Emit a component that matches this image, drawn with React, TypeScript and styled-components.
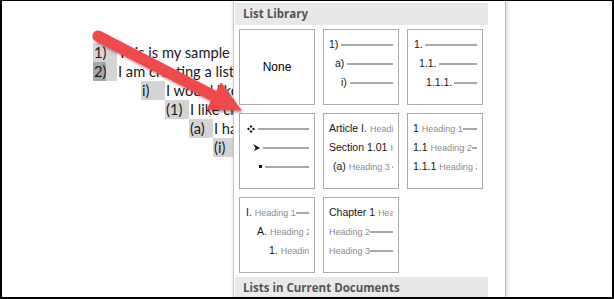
import styled, { createGlobalStyle } from "styled-components";

const GlobalStyle = createGlobalStyle`
    html, body {
        margin: 0;
        padding: 0;
        background: #ffffff;
    }
`;

const Frame = styled.div`
    position: relative;
    width: 614px;
    height: 299px;
    box-sizing: border-box;
    border: 2px solid #000;
    border-top-width: 1px;
    background: #fff;
    overflow: hidden;
`;

const Doc = styled.div`
    padding-top: 42px;
    font-family: Lato, "Liberation Sans", sans-serif;
    font-size: 14.67px;
    color: #1a1a1a;
`;

const DocLine = styled.div<{ $indent: number }>`
    display: flex;
    height: 19px;
    line-height: 19px;
    padding-left: ${(p) => p.$indent}px;
    white-space: nowrap;
`;

const NumBox = styled.span<{ $w: number }>`
    display: inline-flex;
    width: ${(p) => p.$w}px;
    flex-shrink: 0;
    background: #d4d4d4;
    margin-right: 1px;
`;

const NumText = styled.span<{ $selected?: boolean }>`
    display: inline-block;
    width: 12px;
    padding-left: 1px;
    background: ${(p) => (p.$selected ? "#a6a6a6" : "transparent")};
`;

const Panel = styled.div`
    position: absolute;
    left: 231px;
    top: 0;
    bottom: 0;
    width: 273px;
    box-sizing: border-box;
    padding: 2px 17px 0 1px;
    background: #fff;
    border-left: 1px solid #c9c9c9;
    border-right: 1px solid #bdbdbd;
    box-shadow: 2px 0 3px rgba(0, 0, 0, 0.12), -1px 0 2px rgba(0, 0, 0, 0.08);
`;

const SectionHeader = styled.div`
    height: 22px;
    line-height: 22px;
    background: #e9e9e9;
    padding-left: 8px;
    font-family: "Open Sans", "Noto Sans", sans-serif;
    font-weight: 700;
    font-size: 11.5px;
    color: #555;
    white-space: nowrap;
`;

const Grid = styled.div`
    display: grid;
    grid-template-columns: repeat(3, 76px);
    grid-auto-rows: 76px;
    gap: 8px;
    padding: 4px 0 4px 4px;
`;

const Tile = styled.div`
    box-sizing: border-box;
    border: 1px solid #ababab;
    padding: 5px 5px 0 0;
    overflow: hidden;
    font-family: "Liberation Sans", Arial, sans-serif;
    color: #151515;
`;

const NoneTile = styled(Tile)`
    display: flex;
    align-items: center;
    justify-content: center;
    padding: 0;
    font-size: 12px;
    color: #000;
`;

const Row = styled.div<{ $indent: number }>`
    display: flex;
    align-items: center;
    height: 19px;
    margin-left: ${(p) => p.$indent - 1}px;
    overflow: hidden;
    white-space: nowrap;
`;

const Label = styled.span`
    flex-shrink: 0;
    font-size: 10.5px;
    line-height: 19px;
`;

const Heading = styled.span`
    font-size: 9px;
    color: #8c8c8c;
    margin-left: 3px;
`;

const PlainHeading = styled(Heading)`
    margin-left: 0;
`;

const Rule = styled.span<{ $gap?: number }>`
    flex: 1 1 auto;
    min-width: 0;
    height: 2px;
    margin-left: ${(p) => p.$gap ?? 2}px;
    background: #a8a8a8;
`;

const Bullet = styled.svg`
    flex-shrink: 0;
    display: block;
`;

const Arrow = styled.svg`
    position: absolute;
    left: -2px;
    top: -1px;
    pointer-events: none;
`;

const docLines = [
    { indent: 91, num: "1)", text: "This is my sample text." },
    { indent: 91, num: "2)", text: "I am creating a list.", selected: true },
    { indent: 139, num: "i)", text: "I would like to see more." },
    { indent: 163, num: "(1)", text: "I like creating lists." },
    { indent: 187, num: "(a)", text: "I have many ideas." },
    { indent: 211, num: "(i)", text: "" },
];

const Diamond = () => (
    <Bullet width="8" height="8" viewBox="0 0 8 8">
        <path d="M4 0 L5.5 1.5 L4 3 L2.5 1.5Z M4 5 L5.5 6.5 L4 8 L2.5 6.5Z M0 4 L1.5 2.5 L3 4 L1.5 5.5Z M5 4 L6.5 2.5 L8 4 L6.5 5.5Z" fill="#111" />
    </Bullet>
);

const Arrowhead = () => (
    <Bullet width="7" height="7" viewBox="0 0 7 7">
        <path d="M0 0 L7 4 L1 7 L2.5 4Z" fill="#111" />
    </Bullet>
);

const Square = () => (
    <Bullet width="3" height="3" viewBox="0 0 3 3">
        <rect width="3" height="3" fill="#111" />
    </Bullet>
);

const App = () => {
    return (
        <>
            <GlobalStyle />
            <Frame>
                <Doc>
                    {docLines.map((l, i) => (
                        <DocLine key={i} $indent={l.indent}>
                            <NumBox $w={l.num.length > 2 ? 24 : 24}>
                                <NumText $selected={l.selected}>{l.num}</NumText>
                            </NumBox>
                            {l.text}
                        </DocLine>
                    ))}
                </Doc>

                <Panel>
                    <SectionHeader>List Library</SectionHeader>
                    <Grid>
                        <NoneTile>None</NoneTile>

                        <Tile>
                            <Row $indent={6}><Label>1)</Label><Rule $gap={3} /></Row>
                            <Row $indent={12}><Label>a)</Label><Rule $gap={3} /></Row>
                            <Row $indent={18}><Label>i)</Label><Rule $gap={3} /></Row>
                        </Tile>

                        <Tile>
                            <Row $indent={7}><Label>1.</Label><Rule /></Row>
                            <Row $indent={12}><Label>1.1.</Label><Rule /></Row>
                            <Row $indent={19}><Label>1.1.1.</Label><Rule /></Row>
                        </Tile>

                        <Tile>
                            <Row $indent={8}><Diamond /><Rule $gap={3} /></Row>
                            <Row $indent={14}><Arrowhead /><Rule $gap={3} /></Row>
                            <Row $indent={20}><Square /><Rule $gap={3} /></Row>
                        </Tile>

                        <Tile>
                            <Row $indent={6}><Label>Article I.<Heading>Heading 1</Heading></Label><Rule /></Row>
                            <Row $indent={6}><Label>Section 1.01<Heading>Heading 2</Heading></Label><Rule /></Row>
                            <Row $indent={10}><Label>(a)<Heading>Heading 3</Heading></Label><Rule /></Row>
                        </Tile>

                        <Tile>
                            <Row $indent={6}><Label>1<Heading>Heading 1</Heading></Label><Rule $gap={0} /></Row>
                            <Row $indent={6}><Label>1.1<Heading>Heading 2</Heading></Label><Rule $gap={0} /></Row>
                            <Row $indent={6}><Label>1.1.1<Heading>Heading 3</Heading></Label><Rule $gap={0} /></Row>
                        </Tile>

                        <Tile>
                            <Row $indent={7}><Label>I.<Heading>Heading 1</Heading></Label><Rule $gap={0} /></Row>
                            <Row $indent={18}><Label>A.<Heading>Heading 2</Heading></Label><Rule $gap={0} /></Row>
                            <Row $indent={30}><Label>1.<Heading>Heading 3</Heading></Label><Rule $gap={0} /></Row>
                        </Tile>

                        <Tile>
                            <Row $indent={6}><Label>Chapter 1<Heading>Heading 1</Heading></Label><Rule $gap={0} /></Row>
                            <Row $indent={6}><Label><PlainHeading>Heading 2</PlainHeading></Label><Rule $gap={0} /></Row>
                            <Row $indent={6}><Label><PlainHeading>Heading 3</PlainHeading></Label><Rule $gap={0} /></Row>
                        </Tile>
                    </Grid>
                    <SectionHeader>Lists in Current Documents</SectionHeader>
                </Panel>

                <Arrow width="614" height="299" viewBox="0 0 614 299">
                    <defs>
                        <filter id="arrowShadow" x="-10%" y="-10%" width="130%" height="140%">
                            <feDropShadow dx="1" dy="2" stdDeviation="1" floodColor="#7a1014" floodOpacity="0.45" />
                        </filter>
                    </defs>
                    <g filter="url(#arrowShadow)" fill="#f0484c" stroke="#f0484c">
                        <line x1="98" y1="36" x2="216" y2="97" strokeWidth="11" strokeLinecap="round" />
                        <path d="M241 110 L207 109 L221 83 Z" strokeWidth="1" strokeLinejoin="round" />
                    </g>
                </Arrow>
            </Frame>
        </>
    );
};

export default App;
